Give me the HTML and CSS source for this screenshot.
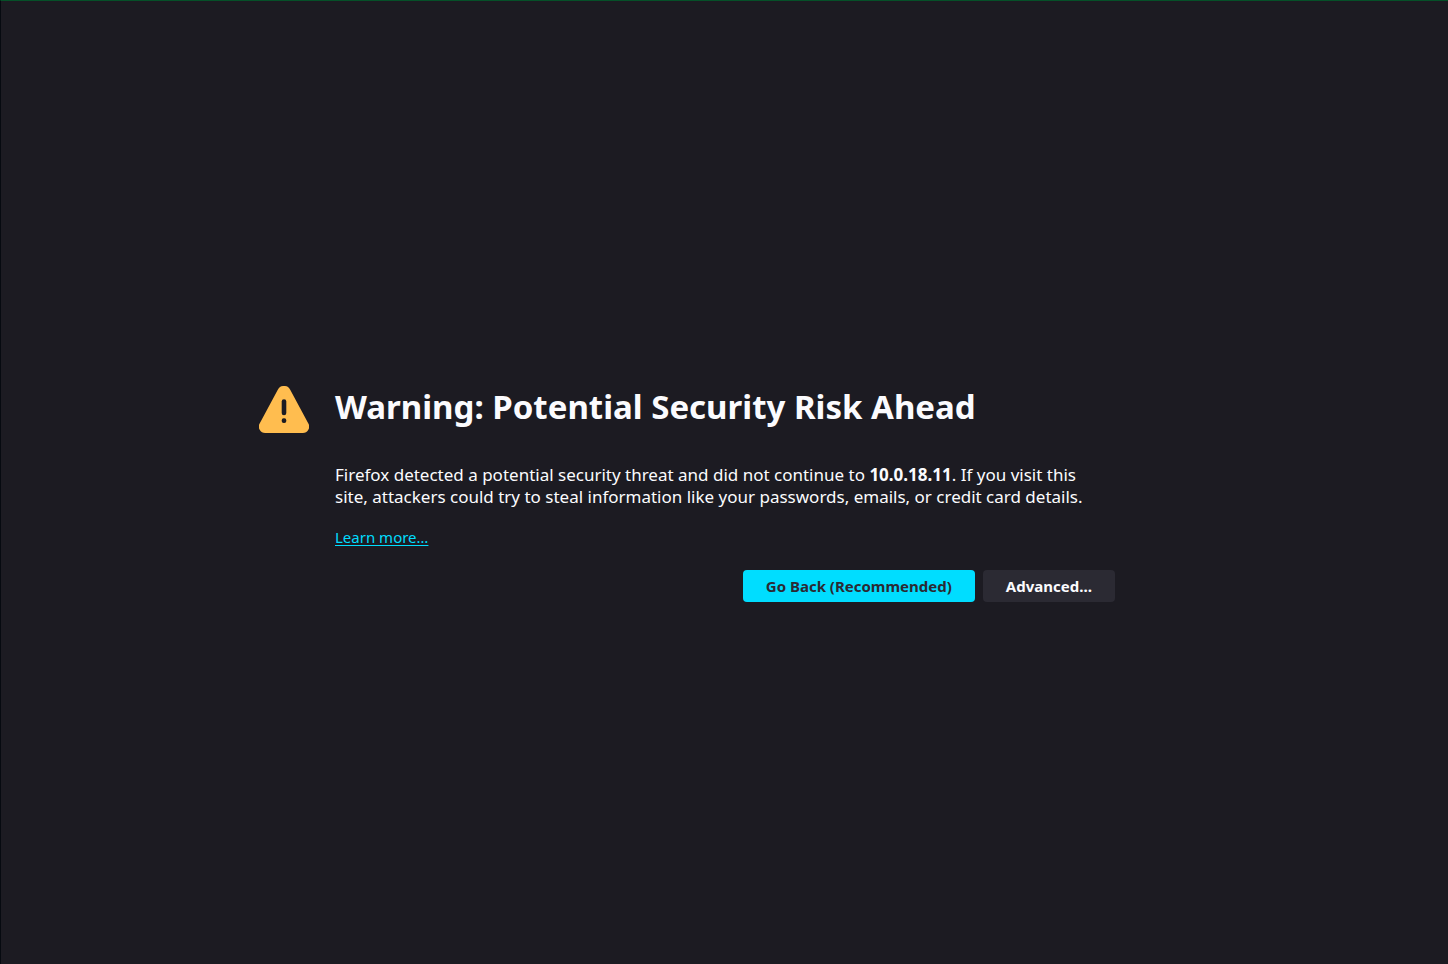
FILE: index.html
```html
<!DOCTYPE html>
<html lang="en">
<head>
<meta charset="utf-8">
<title>Warning: Potential Security Risk Ahead</title>
<link rel="stylesheet" href="styles.css">
</head>
<body class="page">
<main class="warning">
  <svg class="warning-icon" viewBox="0 0 50 48" aria-hidden="true">
    <path fill="#ffbd4f" d="M18.800 3.700a7 7 0 0 1 12.400 0l18 33.500A6.400 6.400 0 0 1 43.500 47h-37A6.400 6.400 0 0 1 .8 37.200z"/>
    <rect x="22.700" y="13.300" width="4.600" height="16" rx="2.300" fill="#1c1b22"/>
    <rect x="22.700" y="32.300" width="4.600" height="4.600" rx="2" fill="#1c1b22"/>
  </svg>
  <div class="warning-body">
    <h1 class="title">Warning: Potential Security Risk Ahead</h1>
    <p class="description">Firefox detected a potential security threat and did not continue to <b>10.0.18.11</b>. If you visit this site, attackers could try to steal information like your passwords, emails, or credit card details.</p>
    <p class="more"><a class="link" href="#">Learn more…</a></p>
    <div class="actions">
      <button class="button primary" type="button">Go Back (Recommended)</button>
      <button class="button" type="button">Advanced…</button>
    </div>
  </div>
</main>
</body>
</html>
```
FILE: styles.css
```css
* { box-sizing: border-box; }

.page {
  display: flex;
  align-items: center;
  justify-content: center;
  min-height: 100vh;
  margin: 0;
  padding: 24px;
  border-top: 1px solid #055028;
  border-left: 1px solid #060a10;
  background: #1c1b22;
  color: #fbfbfe;
  font: 15px/22px "Noto Sans", sans-serif;
}

.warning {
  display: flex;
  gap: 26px;
  width: 100%;
  max-width: 856px;
  padding-top: 22px;
  margin-right: 75px;
}

.warning-icon {
  flex: none;
  width: 50px;
  height: 48px;
}

.warning-body { flex: 1; }

.title {
  margin: 0 0 36px;
  font-size: 33px;
  line-height: 42px;
}

.description {
  margin: 0 0 18px;
  padding-right: 20px;
  font-size: 17px;
}

.more { margin: 0 0 22px; }

.link {
  color: #00ddff;
  text-underline-offset: 2px;
}

.actions {
  display: flex;
  justify-content: flex-end;
  gap: 8px;
}

.button {
  min-height: 32px;
  padding: 0 23px;
  border: 0;
  border-radius: 4px;
  background: #2b2a33;
  color: #fbfbfe;
  font: 700 15px/22px "Noto Sans", sans-serif;
}

.primary {
  background: #00ddff;
  color: #2b2a33;
}
```
